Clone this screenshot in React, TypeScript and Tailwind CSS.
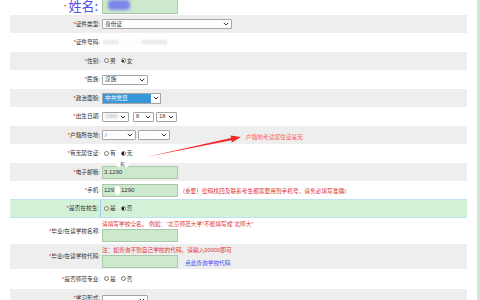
import type { ReactNode } from "react";

const font = "font-['Liberation_Sans','Noto_Sans_CJK_SC',sans-serif]";

function Row({
  label,
  h,
  tone,
  children,
}: {
  label: string;
  h: string;
  tone?: "gray" | "green";
  children?: ReactNode;
}) {
  const bg =
    tone === "gray"
      ? "bg-[#eeeeee]"
      : tone === "green"
        ? "bg-[#d1f2d7] border-y border-[#bfe3ee]"
        : "bg-white";
  return (
    <div className={`flex shrink-0 ${h} ${bg}`}>
      <div
        className={`w-[91px] shrink-0 flex items-center justify-end pr-[1px] text-[5.7px] text-[#333] ${
          tone === "green" ? "border-r border-[#9fd0ea]" : ""
        }`}
      >
        <span className="text-[#e22]">*</span>
        {label}:
      </div>
      <div className="relative flex-1 flex flex-col justify-center pl-[1px] text-[5.7px] text-[#333]">
        {children}
      </div>
    </div>
  );
}

function Chevron() {
  return (
    <svg width="6" height="4" viewBox="0 0 6 4" className="shrink-0">
      <polyline points="0.8,0.8 3,3 5.2,0.8" fill="none" stroke="#333" strokeWidth="1" />
    </svg>
  );
}

function Select({ w, children, blur }: { w: string; children?: ReactNode; blur?: boolean }) {
  return (
    <div
      className={`${w} h-[10px] flex items-center justify-between border border-[#a5a5a5] rounded-[1px] bg-white pl-[2px] pr-[2px] mr-[2px]`}
    >
      <span className={blur ? "blur-[1px] text-[#999]" : ""}>{children}</span>
      <Chevron />
    </div>
  );
}

function Radio({ on, label }: { on?: boolean; label: string }) {
  return (
    <span className="flex items-center gap-[1px] mr-[5px]">
      <span className="w-[5px] h-[5px] rounded-full border border-[#777] bg-white flex items-center justify-center">
        {on && <span className="w-[2.5px] h-[2.5px] rounded-full bg-black" />}
      </span>
      <span>{label}</span>
    </span>
  );
}

function GreenInput({ children }: { children?: ReactNode }) {
  return (
    <div className="w-[76px] h-[13px] flex items-center bg-[#cde9cd] border border-[#a9c9a9] pl-[1px] text-[6px] text-[#333]">
      {children}
    </div>
  );
}

export default function App() {
  return (
    <div className={`relative flex w-[480px] h-[300px] overflow-hidden bg-white ${font}`}>
      <div className="ml-[10px] w-[457px] flex flex-col">
        {/* name row, top cut off */}
        <div className="flex h-[15px] shrink-0 bg-white">
          <div className="w-[91px] shrink-0 flex items-start justify-end pr-[3px] -mt-[2px] text-[13px] leading-[15px] text-[#5050ee] font-['Noto_Sans_CJK_SC',serif]">
            <span className="text-[7px] text-[#e33] leading-[15px]">·</span>
            姓名:
          </div>
          <div className="pl-[1px]">
            <div className="w-[76px] h-[14px] bg-[#cde9cd] border border-t-0 border-[#a9c9a9] relative">
              <div className="absolute left-[5px] top-0 w-[22px] h-[10px] bg-[#7b85ea] blur-[1.5px] rounded-sm" />
            </div>
          </div>
        </div>

        <Row label="证件类型" h="h-[18px]" tone="gray">
          <Select w="w-[130px]">身份证</Select>
        </Row>
        <Row label="证件号码" h="h-[19px]">
          <span className="pl-[1px] blur-[1px] text-[#aaa] tracking-[1px]">1101··· ····3X0000</span>
        </Row>
        <Row label="性别" h="h-[18px]" tone="gray">
          <div className="flex items-center pl-[2px]">
            <Radio label="男" />
            <Radio on label="女" />
          </div>
        </Row>
        <Row label="民族" h="h-[19px]">
          <Select w="w-[46px]">汉族</Select>
        </Row>
        <Row label="政治面貌" h="h-[18px]" tone="gray">
          <div className="w-[59px] h-[11px] flex items-center border border-[#a5a5a5] bg-white">
            <div className="flex-1 h-full bg-[#3797d8] text-white flex items-center pl-[2px]">中共党员</div>
            <div className="w-[9px] flex justify-center">
              <Chevron />
            </div>
          </div>
        </Row>
        <Row label="出生日期" h="h-[19px]">
          <div className="flex items-center">
            <Select w="w-[27px]" blur>
              1990
            </Select>
            <div className="w-[2px]" />
            <Select w="w-[21px]">8</Select>
            <Select w="w-[21px]">18</Select>
          </div>
        </Row>
        <Row label="户籍所在地" h="h-[18px]" tone="gray">
          <div className="flex items-center">
            <Select w="w-[34px]">
              <span className="text-[#333]">/</span>
              <span className="blur-[1px] text-[#aaa]"> ····</span>
            </Select>
            <Select w="w-[32px]" blur>
              ····
            </Select>
            <span className="ml-[74px] mt-[5px] text-[#ff5a5a]">户籍地考试居住证是无</span>
          </div>
        </Row>
        <Row label="有无居住证" h="h-[19px]">
          <div className="flex items-center pl-[2px]">
            <Radio label="有" />
            <Radio on label="无" />
          </div>
        </Row>
        <Row label="电子邮箱" h="h-[18px]" tone="gray">
          <GreenInput>3.1290</GreenInput>
          <div className="absolute left-[15px] -top-[2px] w-[13px] h-[6px] bg-white rounded-sm flex justify-center text-[5px] leading-[6px] text-[#333]">
            有
          </div>
        </Row>
        <Row label="手机" h="h-[18px]">
          <div className="flex items-center">
            <GreenInput>
              129
              <span className="inline-block w-[5px] h-[9px] bg-white rounded-sm mx-[1px]" />
              1290
            </GreenInput>
            <span className="ml-[5px] mt-[3px] text-[#e03333]">
              (重要！密码找回及联系考生都需要用到手机号，请务必填写准确)
            </span>
          </div>
        </Row>
        <Row label="是否在校生" h="h-[19px]" tone="green">
          <div className="flex items-center pl-[2px]">
            <Radio label="是" />
            <Radio on label="否" />
          </div>
        </Row>
        <Row label="毕业/在读学校名称" h="h-[26px]">
          <div className="flex flex-col gap-[2px] pt-[1px]">
            <span className="text-[#e03333] leading-[6px]">
              请填写学校全名。 例如：“北京师范大学”不能填写成“北师大”
            </span>
            <GreenInput />
          </div>
        </Row>
        <Row label="毕业/在读学校代码" h="h-[25px]" tone="gray">
          <div className="flex flex-col gap-[2px] pt-[1px]">
            <span className="text-[#e03333] leading-[6px]">注：如查询不到自己学校的代码，请输入00000即可</span>
            <div className="flex items-end">
              <GreenInput />
              <span className="ml-[7px] text-[#3a4bef]">点此查询学校代码</span>
            </div>
          </div>
        </Row>
        <Row label="是否师范专业" h="h-[20px]">
          <div className="flex items-center pl-[2px]">
            <Radio label="是" />
            <Radio label="否" />
          </div>
        </Row>
        <Row label="学习形式" h="h-[18px]" tone="gray">
          <div className="self-start mt-[4px]">
            <Select w="w-[46px]" />
          </div>
        </Row>
      </div>
      <div className="ml-auto w-[3px] h-full bg-[#cfe8d0]" />

      <svg
        className="absolute left-0 top-0 pointer-events-none"
        width="480"
        height="300"
        viewBox="0 0 480 300"
      >
        <polygon
          points="146,157 231,138.1 230.5,135.6 241,137 231.9,142.6 231.4,140.2"
          fill="#ee2a2a"
        />
      </svg>
    </div>
  );
}
